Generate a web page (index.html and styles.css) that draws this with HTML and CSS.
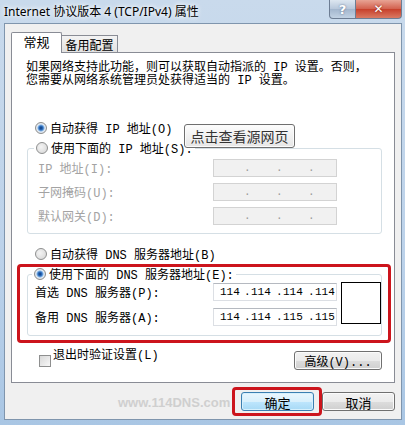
FILE: index.html
```html
<!DOCTYPE html>
<html lang="zh-CN">
<head>
    <meta charset="UTF-8">
    <meta name="viewport" content="width=device-width, initial-scale=1.0">
    <title>Internet 协议版本 4 (TCP/IPv4) 属性</title>
    <link rel="stylesheet" href="styles.css">
</head>
<body>
    <div class="window">
        <div class="titlebar">
            <span class="title">Internet 协议版本 4 (TCP/IPv4) 属性</span>
            <div class="caption">
                <span class="cap-btn help">?</span>
                <span class="cap-btn close">✕</span>
            </div>
        </div>
        <div class="client">
            <div class="tabs">
                <span class="tab active">常规</span>
                <span class="tab">备用配置</span>
            </div>
            <div class="panel">
                <p class="intro">如果网络支持此功能，则可以获取自动指派的 IP 设置。否则，<br>您需要从网络系统管理员处获得适当的 IP 设置。</p>
                <div class="option ip-auto"><span class="radio checked"></span>自动获得 IP 地址(O)</div>
                <fieldset class="group ip-group">
                    <legend class="option"><span class="radio"></span>使用下面的 IP 地址(S):</legend>
                    <div class="field disabled">
                        <span>IP 地址(I):</span>
                        <span class="ip"><span class="seg first"></span><span class="dot">.</span><span class="seg"></span><span class="dot">.</span><span class="seg"></span><span class="dot">.</span><span class="seg last"></span></span>
                    </div>
                    <div class="field disabled">
                        <span>子网掩码(U):</span>
                        <span class="ip"><span class="seg first"></span><span class="dot">.</span><span class="seg"></span><span class="dot">.</span><span class="seg"></span><span class="dot">.</span><span class="seg last"></span></span>
                    </div>
                    <div class="field disabled">
                        <span>默认网关(D):</span>
                        <span class="ip"><span class="seg first"></span><span class="dot">.</span><span class="seg"></span><span class="dot">.</span><span class="seg"></span><span class="dot">.</span><span class="seg last"></span></span>
                    </div>
                </fieldset>
                <div class="option dns-auto"><span class="radio"></span>自动获得 DNS 服务器地址(B)</div>
                <div class="highlight dns-box">
                    <fieldset class="group dns-group">
                        <legend class="option"><span class="radio checked"></span>使用下面的 DNS 服务器地址(E):</legend>
                        <div class="dns-body">
                            <div class="dns-fields">
                                <div class="field">
                                    <span>首选 DNS 服务器(P):</span>
                                    <span class="ip"><span class="seg first">114</span><span class="dot">.</span><span class="seg">114</span><span class="dot">.</span><span class="seg">114</span><span class="dot">.</span><span class="seg last">114</span></span>
                                </div>
                                <div class="field">
                                    <span>备用 DNS 服务器(A):</span>
                                    <span class="ip"><span class="seg first">114</span><span class="dot">.</span><span class="seg">114</span><span class="dot">.</span><span class="seg">115</span><span class="dot">.</span><span class="seg last">115</span></span>
                                </div>
                            </div>
                            <div class="blank-box"></div>
                        </div>
                    </fieldset>
                </div>
                <div class="panel-foot">
                    <span class="checkbox"></span>退出时验证设置(L)
                    <button class="btn advanced">高级(V)...</button>
                </div>
                <button class="btn source-btn">点击查看源网页</button>
            </div>
            <div class="footer">
                <span class="watermark">www.114DNS.com</span>
                <div class="highlight ok-box"><button class="btn default">确定</button></div>
                <button class="btn cancel">取消</button>
            </div>
        </div>
    </div>
</body>
</html>
```
FILE: styles.css
```css
body {
    margin: 0;
    width: 405px;
    height: 430px;
    background-color: #fff;
    font-family: "Liberation Mono", "Noto Sans CJK SC", monospace;
    font-size: 12px;
    color: #000;
}
.window {
    width: 405px;
    height: 425px;
    box-sizing: border-box;
    padding: 0 3px 5px 4px;
    display: flex;
    flex-direction: column;
    background: linear-gradient(to bottom, #c9daec, #bcd2ea 60%, #a9c6e4);
}
.titlebar {
    height: 23px;
    display: flex;
    flex: none;
}
.title {
    font-family: "Noto Sans", "Noto Sans CJK SC", sans-serif;
    font-size: 12px;
    line-height: 24px;
    text-shadow: 0 0 6px #fff, 0 0 4px #fff;
}
.caption {
    margin-left: auto;
    display: flex;
    height: 19px;
}
.cap-btn {
    display: flex;
    align-items: center;
    justify-content: center;
    color: #fff;
    font-family: "DejaVu Sans", sans-serif;
    font-weight: bold;
    border: 1px solid #6d7d93;
    border-top: none;
    box-sizing: border-box;
}
.help {
    width: 27px;
    font-size: 13px;
    border-radius: 0 0 0 4px;
    background: linear-gradient(to bottom, #dde6f0, #b7c7da 50%, #a3b6cd 51%, #c2d2e3);
    text-shadow: 0 0 2px #4f6380;
}
.close {
    width: 46px;
    font-size: 12px;
    border-left: none;
    border-radius: 0 0 4px 0;
    background: linear-gradient(to bottom, #e8a394, #d2604d 50%, #c7402b 51%, #da7a63);
    text-shadow: 0 0 2px #7a1d10;
}
.client {
    flex: 1;
    background-color: #f0f0f0;
    border: 1px solid #7f95ad;
    padding: 8px 6px 0 6px;
    display: flex;
    flex-direction: column;
}
.tabs {
    display: flex;
    align-items: flex-end;
    height: 20px;
    font-family: "Noto Sans CJK SC", sans-serif;
}
.tab {
    height: 17px;
    box-sizing: border-box;
    width: 56px;
    border: 1px solid #898c95;
    border-bottom: none;
    border-left: none;
    background: linear-gradient(to bottom, #f3f3f3, #e1e1e1);
    text-align: center;
    line-height: 17px;
    font-size: 12px;
}
.tab.active {
    position: relative;
    z-index: 1;
    width: 51px;
    height: 21px;
    margin-bottom: -1px;
    border-left: 1px solid #898c95;
    border-radius: 2px 2px 0 0;
    background: #fff;
    line-height: 17px;
    font-size: 13px;
}
.panel {
    position: relative;
    height: 331px;
    box-sizing: border-box;
    background-color: #fff;
    border: 1px solid #898c95;
}
.intro {
    margin: 0;
    padding: 9px 0 0 14px;
    line-height: 13px;
}
.option {
    display: flex;
    align-items: center;
    height: 18px;
    white-space: pre;
}
.ip-auto {
    margin-top: 31px;
    padding-left: 23px;
}
.dns-auto {
    margin-top: 11px;
    padding-left: 23px;
}
.radio {
    width: 12px;
    height: 12px;
    box-sizing: border-box;
    border: 1px solid #8e8f8f;
    border-radius: 50%;
    margin-right: 3px;
    background: radial-gradient(circle at 40% 40%, #f4f4f4, #d4d4d4);
    flex: none;
}
.radio.checked {
    background: radial-gradient(circle, #0d3b7a 0, #2f6fc0 2px, #7fb0e2 3px, #e6eef7 4px, #d4d4d4 6px);
}
.group {
    margin: 2px 12px 0 15px;
    padding: 1px 0 8px 6px;
    border: 1px solid #d5dfe5;
    border-radius: 3px;
    min-width: 0;
}
.group legend {
    padding: 0 2px;
}
.field {
    display: grid;
    grid-template-columns: 175px 124px;
    align-items: center;
    height: 18px;
    margin-top: 6px;
    padding-left: 4px;
    white-space: pre;
}
.ip-group .field:first-of-type {
    margin-top: 1px;
}
.field.disabled {
    color: #a3a3a3;
}
.ip {
    display: flex;
    height: 18px;
    box-sizing: border-box;
    border: 1px solid #dcdfe4;
    border-top-color: #b5b9c0;
    background-color: #fff;
    font-size: 11px;
    line-height: 16px;
}
.disabled .ip {
    background-color: #f1f1f1;
    border-color: #d3d3d3;
    color: #9a9a9a;
}
.seg {
    width: 28px;
    padding-left: 3px;
    box-sizing: border-box;
}
.seg.first {
    width: 30px;
    padding-left: 6px;
}
.seg.last {
    width: 24px;
}
.dot {
    width: 4px;
    text-align: center;
}
.highlight {
    border: 3px solid #cc141c;
    border-radius: 4px;
}
.dns-box {
    margin: 1px 3px 0 5px;
    padding: 0 6px 4px 4px;
}
.dns-group {
    margin: 0 0 0 3px;
    padding: 2px 0 9px 4px;
}
.dns-group legend {
    height: 14px;
}
.dns-body {
    display: flex;
}
.dns-group .field {
    grid-template-columns: 178px 124px;
    padding-left: 3px;
}
.dns-fields .field:first-child {
    margin-top: 0;
}
.dns-fields .field + .field {
    margin-top: 7px;
}
.blank-box {
    width: 40px;
    height: 42px;
    box-sizing: border-box;
    margin: -1px 0 0 4px;
    border: 1px solid #000;
    background-color: #fff;
}
.panel-foot {
    display: flex;
    align-items: center;
    height: 19px;
    margin-top: 8px;
    padding: 0 12px 0 27px;
    white-space: pre;
}
.checkbox {
    width: 12px;
    height: 12px;
    box-sizing: border-box;
    border: 1px solid #8e8f8f;
    margin-right: 2px;
    background: linear-gradient(135deg, #d8d8d8, #f8f8f8);
}
.btn {
    border: 1px solid #707070;
    border-radius: 3px;
    background: linear-gradient(to bottom, #f2f2f2, #ebebeb 50%, #dddddd 51%, #cfcfcf);
    box-shadow: inset 0 0 0 1px #fbfbfb;
    color: #000;
    padding: 0;
    font-family: "Noto Sans CJK SC", sans-serif;
    font-size: 13px;
}
.advanced {
    margin-left: auto;
    width: 88px;
    height: 19px;
    font-family: "Liberation Mono", "Noto Sans CJK SC", monospace;
    font-size: 12px;
}
.source-btn {
    position: absolute;
    left: 172px;
    top: 71px;
    width: 111px;
    height: 24px;
    border-color: #6f6f6f;
    background: linear-gradient(to bottom, #fdfdfd, #f1f1f1 50%, #e6e6e6);
    color: #333;
    font-size: 14px;
    line-height: 20px;
}
.footer {
    display: flex;
    align-items: flex-start;
    padding-top: 4px;
}
.watermark {
    margin: 8px auto 0 107px;
    font-family: "Liberation Sans", Arial, sans-serif;
    font-weight: bold;
    font-size: 13px;
    color: #cfcfcf;
}
.ok-box {
    padding: 2px 5px 2px 6px;
}
.btn.default {
    display: block;
    width: 73px;
    height: 19px;
    border-color: #3c7fb1;
    background: linear-gradient(to bottom, #eaf6fd, #d9f0fc 50%, #bee6fd 51%, #a7d9f5);
    box-shadow: inset 0 0 0 1px #d6f0fd;
}
.cancel {
    width: 73px;
    height: 19px;
    margin-top: 5px;
}
```
